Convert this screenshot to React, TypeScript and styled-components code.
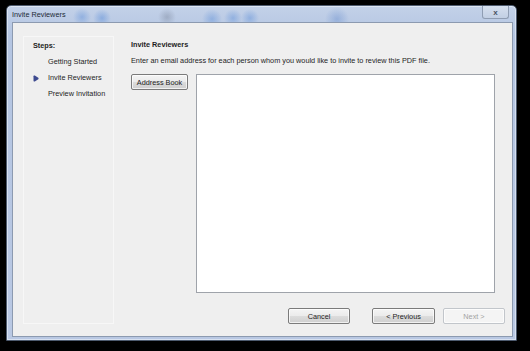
import React from "react";
import styled, { createGlobalStyle } from "styled-components";

const GlobalStyle = createGlobalStyle`
  * { box-sizing: border-box; }
  html, body {
    margin: 0;
    padding: 0;
    background: #000;
    font-family: "Liberation Sans", Arial, sans-serif;
    font-size: 7.3px;
    color: #1e1e1e;
  }
`;

const Screen = styled.div`
  width: 530px;
  height: 351px;
  padding: 5px 0 0 6px;
`;

const Window = styled.div`
  width: 511px;
  height: 336px;
  display: flex;
  flex-direction: column;
  padding: 0 3px 3px 5px;
  border: 1px solid #4d5a6e;
  border-radius: 5px 5px 0 0;
  background:
    radial-gradient(circle at 75px 11px, rgba(80, 135, 215, 0.4) 0, rgba(80, 135, 215, 0) 9px),
    radial-gradient(circle at 95px 12px, rgba(80, 135, 215, 0.45) 0, rgba(80, 135, 215, 0) 9px),
    radial-gradient(circle at 160px 11px, rgba(90, 100, 120, 0.3) 0, rgba(90, 100, 120, 0) 9px),
    radial-gradient(circle at 205px 13px, rgba(80, 135, 215, 0.4) 0, rgba(80, 135, 215, 0) 10px),
    radial-gradient(circle at 226px 12px, rgba(80, 135, 215, 0.4) 0, rgba(80, 135, 215, 0) 9px),
    radial-gradient(circle at 243px 12px, rgba(80, 135, 215, 0.4) 0, rgba(80, 135, 215, 0) 9px),
    radial-gradient(circle at 330px 13px, rgba(80, 125, 200, 0.35) 0, rgba(80, 125, 200, 0) 12px),
    linear-gradient(#c3d1e8, #b4c5e2 30px, #b9c8e3);
  box-shadow: inset 0 0 0 1px rgba(255, 255, 255, 0.45);
`;

const TitleBar = styled.div`
  height: 16px;
  display: flex;
  align-items: center;
  justify-content: space-between;
  padding-right: 4px;
`;

const Title = styled.span`
  color: #222a36;
`;

const CloseButton = styled.div`
  width: 27px;
  height: 13px;
  margin-top: -3px;
  display: flex;
  align-items: center;
  justify-content: center;
  border: 1px solid #8f9db3;
  border-top: none;
  border-radius: 0 0 3px 3px;
  background: linear-gradient(#d6e0ef, #c2cfe4);
  color: #4a5364;
  font-size: 8px;
  font-weight: bold;
`;

const Client = styled.div`
  flex: 1;
  display: flex;
  border: 1px solid #8c9ab0;
  background: #efefef;
`;

const Sidebar = styled.div`
  width: 91px;
  margin: 13px 0 12px 10px;
  padding: 4px 0 0 9px;
  border: 1px solid #f7f7f7;
`;

const StepsTitle = styled.div`
  font-weight: bold;
  line-height: 10px;
  height: 10px;
`;

const StepList = styled.div`
  display: flex;
  flex-direction: column;
  margin-top: 6px;
  gap: 6px;
`;

const Step = styled.div<{ $current?: boolean }>`
  display: flex;
  align-items: center;
  height: 10px;
  line-height: 10px;
  padding-left: ${(p) => (p.$current ? "0" : "15px")};
  gap: 9px;
`;

const Main = styled.div`
  flex: 1;
  display: flex;
  flex-direction: column;
  padding: 17px 7px 12px 17px;
`;

const Heading = styled.div`
  font-weight: bold;
  line-height: 10px;
  height: 10px;
`;

const Instruction = styled.div`
  margin-top: 6px;
  line-height: 10px;
  height: 10px;
`;

const EntryRow = styled.div`
  display: flex;
  gap: 8px;
  margin-top: 8px;
  height: 219px;
`;

const Button = styled.div<{ $width: number; $disabled?: boolean }>`
  width: ${(p) => p.$width}px;
  height: 16px;
  display: flex;
  align-items: center;
  justify-content: center;
  border: 1px solid ${(p) => (p.$disabled ? "#c2c6cb" : "#7b7b7b")};
  border-radius: 2px;
  background: ${(p) =>
    p.$disabled
      ? "#f4f4f4"
      : "linear-gradient(#f4f4f4 0%, #ebebeb 50%, #dcdcdc 51%, #cfcfcf 100%)"};
  color: ${(p) => (p.$disabled ? "#a3a3a3" : "#1e1e1e")};
  box-shadow: inset 0 0 0 1px rgba(255, 255, 255, 0.7);
`;

const AddressBox = styled.div`
  flex: 1;
  margin-right: 10px;
  background: #fff;
  border: 1px solid #9fa3aa;
`;

const Footer = styled.div`
  display: flex;
  justify-content: flex-end;
  margin-top: auto;
  gap: 8px;
`;

const Spacer = styled.div`
  width: 6px;
`;

const Bullet = () => (
  <svg width="6" height="7" viewBox="0 0 6 7">
    <path d="M0.5 1.2 Q0.5 0 1.8 0.6 L5.3 2.8 Q6 3.5 5.3 4.2 L1.8 6.4 Q0.5 7 0.5 5.8 Z" fill="#3d4a8f" />
  </svg>
);

export default function App() {
  return (
    <Screen>
      <GlobalStyle />
      <Window>
        <TitleBar>
          <Title>Invite Reviewers</Title>
          <CloseButton>x</CloseButton>
        </TitleBar>
        <Client>
          <Sidebar>
            <StepsTitle>Steps:</StepsTitle>
            <StepList>
              <Step>Getting Started</Step>
              <Step $current>
                <Bullet />
                Invite Reviewers
              </Step>
              <Step>Preview Invitation</Step>
            </StepList>
          </Sidebar>
          <Main>
            <Heading>Invite Reviewers</Heading>
            <Instruction>
              Enter an email address for each person whom you would like to invite to review this PDF file.
            </Instruction>
            <EntryRow>
              <Button $width={57}>Address Book</Button>
              <AddressBox />
            </EntryRow>
            <Footer>
              <Button $width={62}>Cancel</Button>
              <Spacer />
              <Button $width={63}>&lt; Previous</Button>
              <Button $width={62} $disabled>
                Next &gt;
              </Button>
            </Footer>
          </Main>
        </Client>
      </Window>
    </Screen>
  );
}
